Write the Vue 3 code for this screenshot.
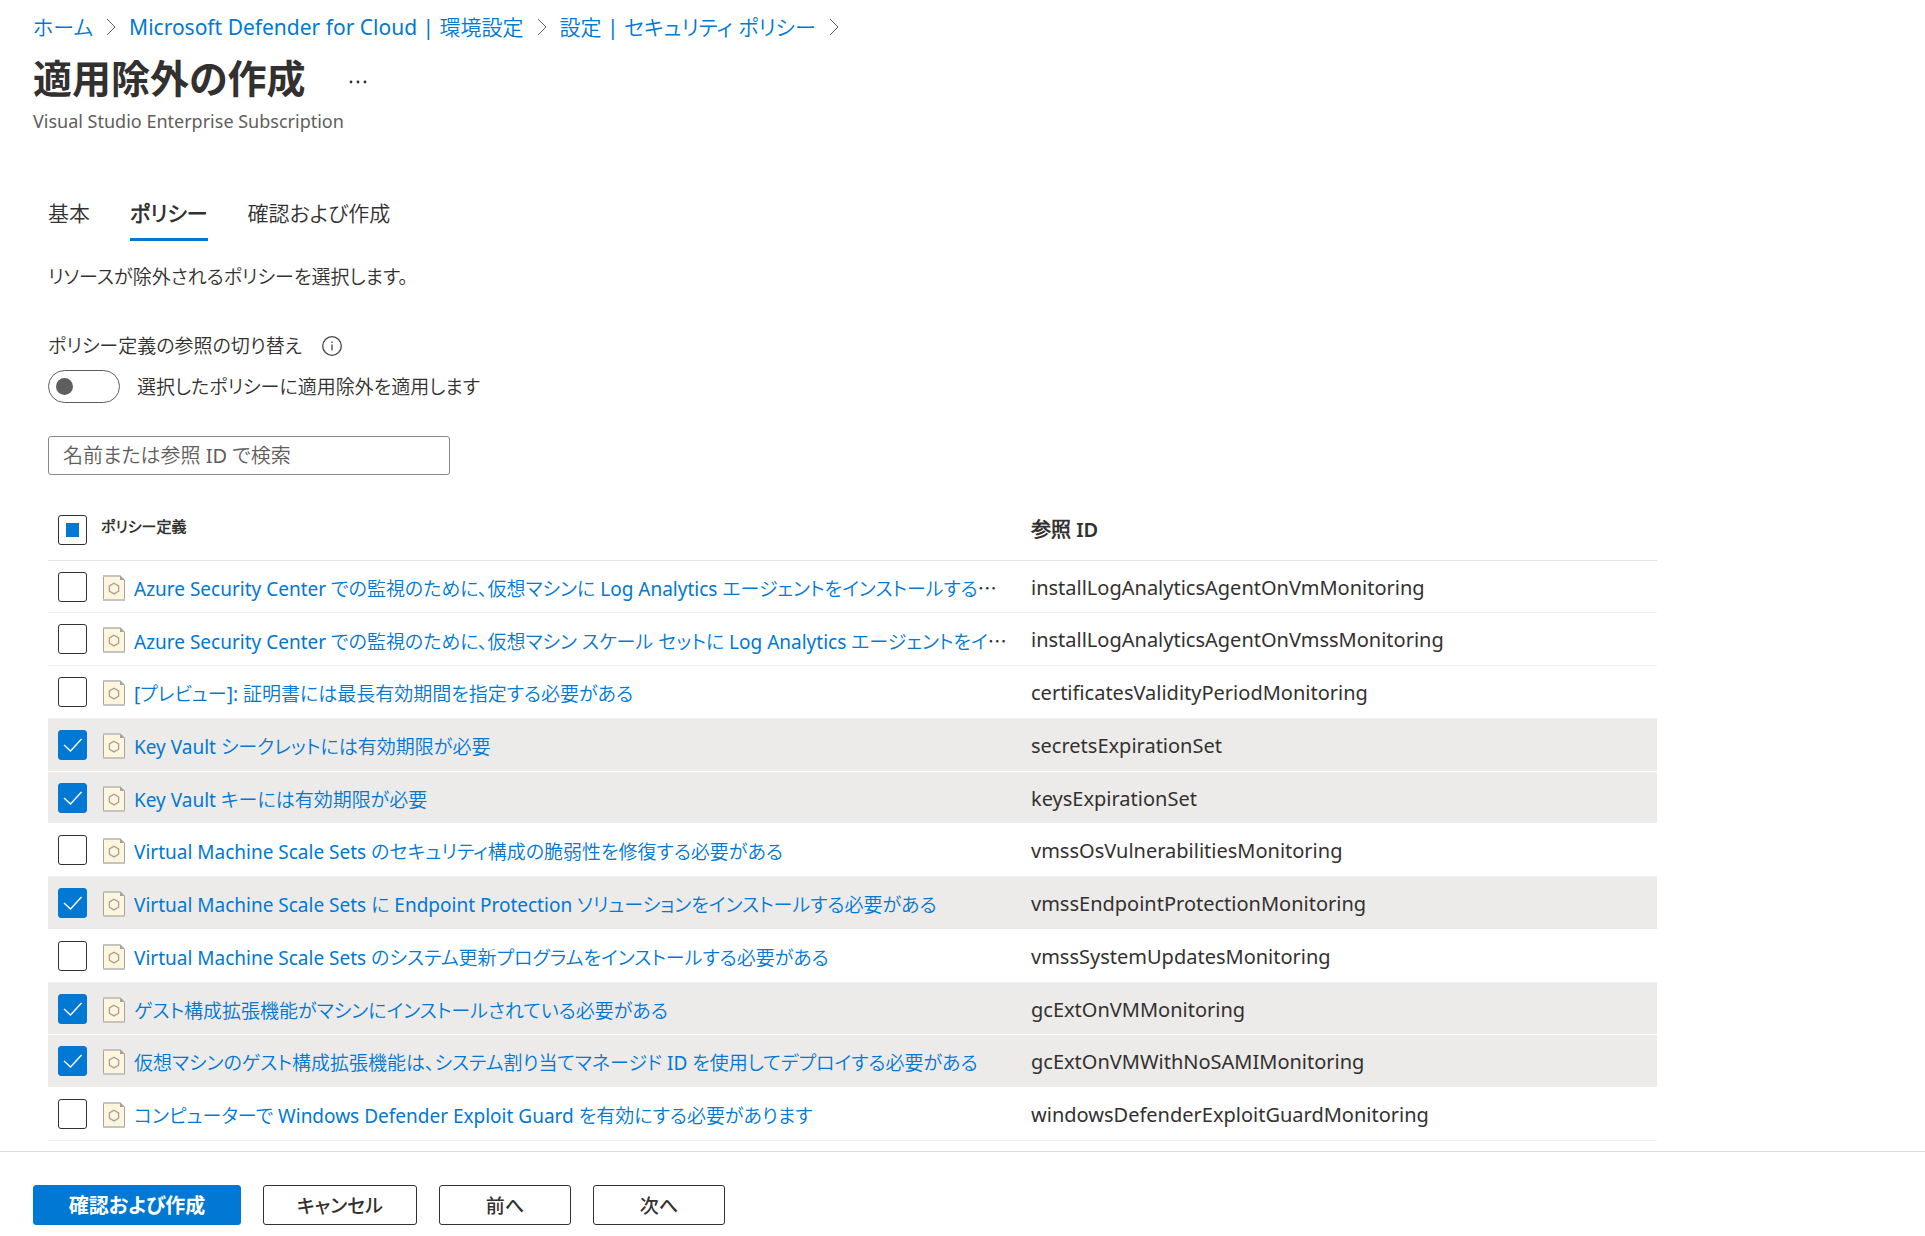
<script setup>
import { ref, computed } from 'vue'

const crumbs = ['ホーム', 'Microsoft Defender for Cloud | 環境設定', '設定 | セキュリティ ポリシー']
const tabs = ['基本', 'ポリシー', '確認および作成']
const activeTab = ref(1)
const applyToSelected = ref(false)
const search = ref('')

const policies = ref([
  { name: 'Azure Security Center での監視のために、仮想マシンに Log Analytics エージェントをインストールする', more: true, id: 'installLogAnalyticsAgentOnVmMonitoring', checked: false },
  { name: 'Azure Security Center での監視のために、仮想マシン スケール セットに Log Analytics エージェントをイ', more: true, id: 'installLogAnalyticsAgentOnVmssMonitoring', checked: false },
  { name: '[プレビュー]: 証明書には最長有効期間を指定する必要がある', id: 'certificatesValidityPeriodMonitoring', checked: false },
  { name: 'Key Vault シークレットには有効期限が必要', id: 'secretsExpirationSet', checked: true },
  { name: 'Key Vault キーには有効期限が必要', id: 'keysExpirationSet', checked: true },
  { name: 'Virtual Machine Scale Sets のセキュリティ構成の脆弱性を修復する必要がある', id: 'vmssOsVulnerabilitiesMonitoring', checked: false },
  { name: 'Virtual Machine Scale Sets に Endpoint Protection ソリューションをインストールする必要がある', id: 'vmssEndpointProtectionMonitoring', checked: true },
  { name: 'Virtual Machine Scale Sets のシステム更新プログラムをインストールする必要がある', id: 'vmssSystemUpdatesMonitoring', checked: false },
  { name: 'ゲスト構成拡張機能がマシンにインストールされている必要がある', id: 'gcExtOnVMMonitoring', checked: true },
  { name: '仮想マシンのゲスト構成拡張機能は、システム割り当てマネージド ID を使用してデプロイする必要がある', id: 'gcExtOnVMWithNoSAMIMonitoring', checked: true },
  { name: 'コンピューターで Windows Defender Exploit Guard を有効にする必要があります', id: 'windowsDefenderExploitGuardMonitoring', checked: false },
])

const allChecked = computed(() => policies.value.every(p => p.checked))
const someChecked = computed(() => !allChecked.value && policies.value.some(p => p.checked))
function toggleAll(e) {
  policies.value.forEach(p => { p.checked = e.target.checked })
}
</script>

<template>
  <div class="page" lang="ja">
    <header class="head">
      <nav class="crumbs" aria-label="階層リンク">
        <template v-for="c in crumbs" :key="c">
          <a href="#">{{ c }}</a>
          <svg class="chevron" viewBox="0 0 10 18" aria-hidden="true"><path d="M1 1l8 8-8 8" /></svg>
        </template>
      </nav>
      <div class="title-row">
        <h1>適用除外の作成</h1>
        <button class="more" type="button" aria-label="その他">
          <svg viewBox="0 0 18 4"><circle cx="2" cy="2" r="1.4" /><circle cx="9" cy="2" r="1.4" /><circle cx="16" cy="2" r="1.4" /></svg>
        </button>
      </div>
      <p class="subtitle">Visual Studio Enterprise Subscription</p>
    </header>

    <main class="body">
      <div class="tabs" role="tablist">
        <button
          v-for="(t, i) in tabs" :key="t" type="button" role="tab" class="tab"
          :class="{ active: i === activeTab }" :aria-selected="i === activeTab" @click="activeTab = i"
        >{{ t }}</button>
      </div>

      <p class="desc">リソースが除外されるポリシーを選択します。</p>

      <div class="label-row">
        <span id="switch-title">ポリシー定義の参照の切り替え</span>
        <svg class="info" viewBox="0 0 20 20" aria-hidden="true">
          <circle cx="10" cy="10" r="9.3" />
          <path d="M10 8.5v6M10 5.5v1.6" />
        </svg>
      </div>
      <div class="switch-row">
        <input id="apply" v-model="applyToSelected" class="switch" type="checkbox" role="switch" aria-describedby="switch-title">
        <label for="apply">選択したポリシーに適用除外を適用します</label>
      </div>

      <input v-model="search" class="search" type="text" placeholder="名前または参照 ID で検索" aria-label="名前または参照 ID で検索">

      <table class="grid">
        <colgroup><col class="c-check"><col class="c-name"><col></colgroup>
        <thead>
          <tr>
            <th class="check">
              <input class="box" type="checkbox" aria-label="すべて選択" :checked="allChecked" :indeterminate.prop="someChecked" @change="toggleAll">
            </th>
            <th class="th-name" scope="col">ポリシー定義</th>
            <th class="th-id" scope="col">参照 ID</th>
          </tr>
        </thead>
        <tbody>
          <tr v-for="p in policies" :key="p.id" :class="{ selected: p.checked }">
            <td class="check"><input v-model="p.checked" class="box" type="checkbox" :aria-label="p.name"></td>
            <td class="name">
              <div class="name-in">
                <svg class="doc" viewBox="0 0 22 26" aria-hidden="true">
                  <path d="M.5 .5h16.5l4.500 4.500v20.500H.5z" fill="#fff4dc" />
                  <path d="M.5 0v26M21.500 5v21" stroke="#a3a3a3" />
                  <path d="M0 1h17M0 25h22" stroke="#c4c4c0" stroke-width="2" />
                  <path d="M17 0l5 5h-5z" fill="#a3a3a3" />
                  <path d="M11 8.200l4.600 2.700v5.300L11 18.900l-4.600-2.700v-5.300z" fill="none" stroke="#a3a096" stroke-width="1.300" />
                </svg>
                <span class="name-text"><a href="#">{{ p.name }}</a><span v-if="p.more" class="dots">…</span></span>
              </div>
            </td>
            <td class="id">{{ p.id }}</td>
          </tr>
        </tbody>
      </table>
    </main>

    <footer class="foot">
      <button class="btn primary" type="button">確認および作成</button>
      <button class="btn cancel" type="button">キャンセル</button>
      <button class="btn" type="button">前へ</button>
      <button class="btn" type="button">次へ</button>
    </footer>
  </div>
</template>

<style>
body {
  margin: 0;
  background: #fff;
}
</style>

<style scoped>
.page {
  box-sizing: border-box;
  min-height: 100vh;
  display: flex;
  flex-direction: column;
  color: #323130;
  font-family: 'Noto Sans', 'Noto Sans CJK JP DemiLight', 'Noto Sans CJK JP', sans-serif;
  font-size: 19px;
  line-height: 28px;
  font-feature-settings: 'palt';
}
.page *,
.page *::before {
  box-sizing: border-box;
}
button,
input {
  font: inherit;
  color: inherit;
  font-feature-settings: inherit;
  margin: 0;
}
h1,
p {
  margin: 0;
}
a {
  color: #0078d4;
  text-decoration: none;
}
.head {
  padding: 12px 33px 0;
}
.crumbs {
  display: flex;
  align-items: center;
  gap: 13px;
  font-size: 21px;
  line-height: 30px;
}
.chevron {
  width: 10px;
  height: 18px;
  fill: none;
  stroke: #605e5c;
}
.title-row {
  display: flex;
  align-items: center;
  gap: 36px;
  margin-top: 8px;
  padding-bottom: 2px;
}
h1 {
  font-family: 'Noto Sans', 'Noto Sans CJK JP', sans-serif;
  font-size: 39px;
  font-weight: 600;
  line-height: 56px;
}
.more {
  display: flex;
  padding: 16px 8px 8px;
  border: 0;
  background: none;
}
.more svg {
  width: 18px;
  height: 4px;
  fill: #323130;
}
.subtitle {
  color: #605e5c;
  font-size: 18px;
  line-height: 26px;
}
.body {
  flex: 1;
  padding: 59px 48px 10px;
}
.tabs {
  display: flex;
  gap: 40px;
}
.tab {
  padding: 0 0 5px;
  border: 0;
  border-bottom: 3px solid transparent;
  background: none;
  font-size: 21px;
  line-height: 40px;
}
.tab.active {
  border-bottom-color: #0078d4;
  font-weight: 600;
}
.desc {
  margin-top: 22px;
}
.label-row {
  display: flex;
  align-items: center;
  gap: 20px;
  margin-top: 41px;
}
.info {
  width: 20px;
  height: 20px;
  fill: none;
  stroke: #484644;
  stroke-width: 1.3;
}
.switch-row {
  display: flex;
  align-items: center;
  gap: 17px;
  margin-top: 10px;
}
.switch {
  appearance: none;
  display: flex;
  align-items: center;
  width: 72px;
  height: 33px;
  padding: 0 7px;
  border: 1px solid #605e5c;
  border-radius: 17px;
}
.switch::before {
  content: '';
  width: 17px;
  height: 17px;
  border-radius: 50%;
  background: #605e5c;
}
.switch:checked {
  justify-content: flex-end;
  border-color: #0078d4;
  background: #0078d4;
}
.switch:checked::before {
  background: #fff;
}
.search {
  display: block;
  width: 402px;
  height: 39px;
  margin-top: 33px;
  padding: 0 14px;
  border: 1px solid #8a8886;
  border-radius: 3px;
  background: #fff;
  font-size: 20px;
}
.search::placeholder {
  color: #605e5c;
  opacity: 1;
}
.grid {
  width: 100%;
  max-width: 1609px;
  margin-top: 24px;
  border-collapse: separate;
  border-spacing: 0;
  table-layout: fixed;
}
.c-check {
  width: 53px;
}
.c-name {
  width: 930px;
}
th,
td {
  height: 53px;
  padding: 0;
  border-bottom: 1px solid #f3f2f1;
  text-align: left;
  white-space: nowrap;
}
tbody tr:nth-child(4n + 1) td {
  height: 52px;
}
th {
  height: 62px;
  border-bottom-color: #e5e4e3;
  font-weight: 600;
}
.check {
  padding-left: 10px;
}
.th-name {
  padding-bottom: 8px;
  font-size: 15px;
}
.box {
  appearance: none;
  display: block;
  width: 29px;
  height: 30px;
  border: 1px solid #323130;
  border-radius: 3px;
  background: #fff;
}
.box:checked {
  border-color: #0078d4;
  background: #0078d4 url("data:image/svg+xml,%3Csvg xmlns='http://www.w3.org/2000/svg' viewBox='0 0 27 28'%3E%3Cpath d='M5 14l6.500 6L22.500 8' fill='none' stroke='white' stroke-width='1.400'/%3E%3C/svg%3E") center / 27px 28px no-repeat;
}
.box:indeterminate {
  background: linear-gradient(#0078d4, #0078d4) center / 13px 14px no-repeat;
}
.selected td {
  border-bottom-color: #fff;
  background: #edebe9;
}
.name-in {
  display: flex;
  align-items: center;
  gap: 9px;
  padding: 2px 0 0 2px;
}
.doc {
  flex: none;
  width: 22px;
  height: 26px;
}
.name-text {
  padding-top: 2px;
}
.dots {
  font-family: 'Noto Sans CJK JP', sans-serif;
}
.id,
.th-id {
  font-size: 20px;
}
.id {
  padding-top: 2px;
}
.foot {
  display: flex;
  gap: 22px;
  padding: 33px 33px 11px;
  border-top: 1px solid #dcdbda;
}
.btn {
  width: 132px;
  height: 40px;
  padding: 0;
  border: 1px solid #323130;
  border-radius: 3px;
  background: #fff;
  font-family: 'Noto Sans CJK JP', sans-serif;
  font-weight: 500;
}
.cancel {
  width: 154px;
}
.primary {
  width: 208px;
  border-color: #0078d4;
  background: #0078d4;
  color: #fff;
  font-size: 20px;
  font-weight: 600;
}
</style>
